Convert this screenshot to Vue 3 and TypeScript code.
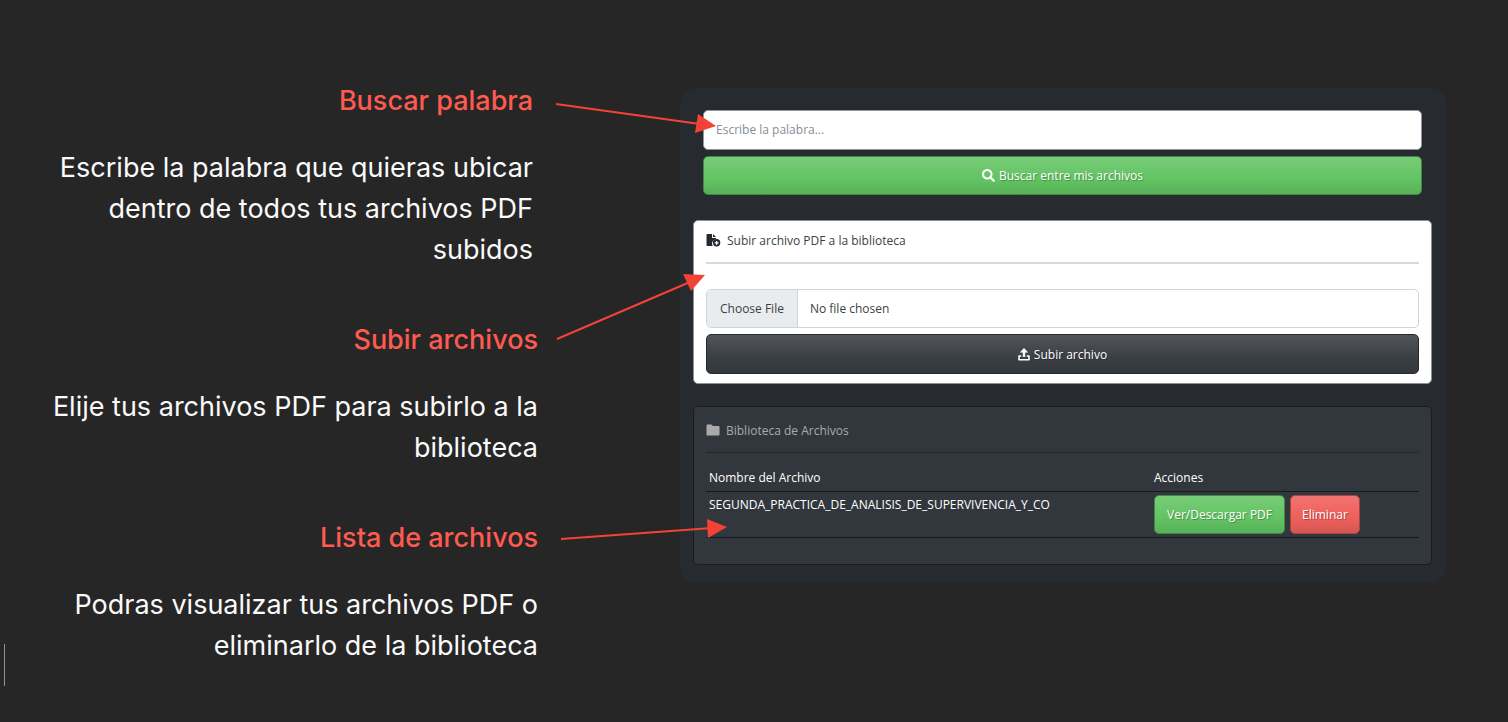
<script setup lang="ts">
import { ref } from 'vue'

interface Note {
  title: string
  text: string
}

const notes: Note[] = [
  { title: 'Buscar palabra', text: 'Escribe la palabra que quieras ubicar dentro de todos tus archivos PDF subidos' },
  { title: 'Subir archivos', text: 'Elije tus archivos PDF para subirlo a la biblioteca' },
  { title: 'Lista de archivos', text: 'Podras visualizar tus archivos PDF o eliminarlo de la biblioteca' },
]

const files = ref<string[]>(['SEGUNDA_PRACTICA_DE_ANALISIS_DE_SUPERVIVENCIA_Y_CO'])
const word = ref('')

function remove(index: number) {
  files.value.splice(index, 1)
}
</script>

<template>
  <main class="page">
    <section class="notes">
      <article v-for="(note, i) in notes" :key="note.title" class="note" :class="{ inset: i === 0 }">
        <h2>{{ note.title }}</h2>
        <p>{{ note.text }}</p>
      </article>
    </section>

    <section class="panel">
      <form class="search" @submit.prevent>
        <input v-model="word" class="word" type="text" placeholder="Escribe la palabra..." aria-label="Palabra" />
        <button class="btn green" type="submit">
          <svg class="icon" viewBox="0 0 512 512" width="13" height="13" aria-hidden="true">
            <path fill="currentColor" d="M505 442.700 405.300 343c-4.500-4.500-10.600-7-17-7H372c27.600-35.300 44-79.700 44-128C416 93.100 322.900 0 208 0S0 93.100 0 208s93.100 208 208 208c48.300 0 92.700-16.400 128-44v16.300c0 6.400 2.500 12.500 7 17l99.700 99.700c9.400 9.400 24.600 9.400 33.900 0l28.300-28.300c9.400-9.400 9.400-24.600.1-34zM208 336c-70.700 0-128-57.200-128-128 0-70.700 57.200-128 128-128 70.700 0 128 57.200 128 128 0 70.700-57.200 128-128 128z" />
          </svg>
          <span>Buscar entre mis archivos</span>
        </button>
      </form>

      <form class="card upload" @submit.prevent>
        <label class="card-title" for="pdf">
          <svg class="icon" viewBox="0 0 15 13" width="15" height="13" aria-hidden="true">
            <path fill="#24292e" d="M1.500 0H6v4h4v1.200A4.300 4.300 0 0 0 6.800 12H1.500C.9 12 .5 11.600.5 11V1c0-.6.4-1 1-1zM7 0l3 3H7z" />
            <circle cx="10.600" cy="8.800" r="3.700" fill="#24292e" />
            <path fill="none" stroke="#fff" stroke-width="1.300" d="M10.600 6.900v3.800M8.700 8.800h3.800" />
          </svg>
          <span>Subir archivo PDF a la biblioteca</span>
        </label>
        <hr />
        <input id="pdf" class="file" type="file" accept="application/pdf" />
        <button class="btn dark" type="submit">
          <svg class="icon" viewBox="0 0 12 13" width="12" height="13" aria-hidden="true">
            <path fill="currentColor" d="M6 0 10.200 4.600H7.200V9H4.800V4.600H1.800z" />
            <path fill="none" stroke="currentColor" stroke-width="1.600" stroke-linejoin="round" d="M3.300 8H1v3.800h10V8H8.700" />
          </svg>
          <span>Subir archivo</span>
        </button>
      </form>

      <section class="card library">
        <h3 class="card-title">
          <svg class="icon" viewBox="0 0 14 12" width="14" height="12" aria-hidden="true">
            <path fill="currentColor" d="M1.500.5h4L7 2h5.500c.7 0 1 .4 1 1v7.500c0 .7-.4 1-1 1h-11c-.7 0-1-.4-1-1v-9c0-.6.4-1 1-1z" />
          </svg>
          <span>Biblioteca de Archivos</span>
        </h3>
        <hr />
        <table>
          <thead>
            <tr>
              <th class="name">Nombre del Archivo</th>
              <th>Acciones</th>
            </tr>
          </thead>
          <tbody>
            <tr v-for="(file, i) in files" :key="file">
              <td>{{ file }}</td>
              <td>
                <div class="actions">
                  <button class="btn green" type="button">Ver/Descargar PDF</button>
                  <button class="btn red" type="button" @click="remove(i)">Eliminar</button>
                </div>
              </td>
            </tr>
          </tbody>
        </table>
      </section>
    </section>

    <svg class="arrows" width="740" height="560" viewBox="0 0 740 560" aria-hidden="true">
      <g stroke="#f44336" stroke-width="2">
        <path d="M556 104 700 124M557 339 690 282M561 539 712 528" />
      </g>
      <g fill="#f44336">
        <path d="M716 126 698 114 695 133z" />
        <path d="M705 275 683 274 691 291z" />
        <path d="M727 527 707 519 708 538z" />
      </g>
    </svg>
    <span class="caret" aria-hidden="true"></span>
  </main>
</template>

<style>
body {
  margin: 0;
  background: #262626;
}
</style>

<style scoped>
* {
  box-sizing: border-box;
}

.page {
  position: relative;
  display: flex;
  align-items: flex-start;
  gap: 142px;
  min-height: 100vh;
  padding: 80px 62px 0 50px;
  background: #262626;
  font-family: 'Open Sans', 'Noto Sans', sans-serif;
  font-size: 12px;
}

.notes {
  display: flex;
  flex: 0 0 488px;
  flex-direction: column;
  gap: 49px;
  font-family: Inter, sans-serif;
  font-size: 27px;
  line-height: 41px;
  text-align: right;
}

.note.inset {
  padding-right: 5px;
}

.note h2 {
  margin: 0 0 26px;
  color: #ff5a50;
  font-size: 27px;
  font-weight: 500;
}

.note p {
  margin: 0;
  color: #fafafa;
}

.panel {
  display: flex;
  flex: 1;
  flex-direction: column;
  min-width: 0;
  margin-top: 8px;
  padding: 22px 14px 18px 13px;
  border-radius: 16px;
  background: #272b30;
}

.search {
  display: grid;
  gap: 6px;
  margin-bottom: 25px;
  padding: 0 10px;
}

.word,
.file {
  width: 100%;
  border: 1px solid #ced4da;
  border-radius: 5px;
  background: #fff;
  color: #3a3f44;
  font: inherit;
}

.word {
  height: 40px;
  padding: 0 12px 2px;
  border-color: #92969c;
}

.word::placeholder {
  color: #868e96;
  opacity: 1;
}

.file {
  height: 39px;
  padding: 0;
  line-height: 37px;
  overflow: hidden;
}

.file::file-selector-button {
  height: 37px;
  margin: 0 12px 0 0;
  padding: 0 13px;
  border: 0;
  border-right: 1px solid #ced4da;
  background: #e9ecef;
  color: #3a3f44;
  font: inherit;
}

.btn {
  display: flex;
  align-items: center;
  justify-content: center;
  gap: 4px;
  height: 39px;
  padding: 0 12px;
  border: 1px solid;
  border-radius: 5px;
  color: #fff;
  font: inherit;
  text-shadow: 1px 1px 1px rgba(0, 0, 0, 0.3);
  white-space: nowrap;
}

.green {
  border-color: #3f8a40;
  background: linear-gradient(#78cc78, #62c462 60%, #58b058);
}

.red {
  padding: 0 11px;
  border-color: #a84440;
  background: linear-gradient(#f17470, #ee5f5b 60%, #d65652);
}

.dark {
  width: 100%;
  height: 40px;
  border-color: #25292c;
  background: linear-gradient(#52565b, #3a3f44 60%, #34393d);
}

.icon {
  flex: none;
}

.card {
  padding: 10px 12px;
  border: 1px solid #8c9095;
  border-radius: 5px;
}

.card-title {
  display: flex;
  align-items: center;
  gap: 6px;
  height: 20px;
  margin: 0;
  font-size: 12px;
  font-weight: 400;
}

hr {
  height: 1px;
  margin: 0;
  border: 0;
}

.upload {
  display: flex;
  flex-direction: column;
  margin-bottom: 22px;
  padding: 9px 12px;
  background: #fff;
  color: #3a3f44;
}

.upload hr {
  height: 2px;
  margin: 12px 0 25px;
  background: #d8d9da;
}

.upload .dark {
  margin-top: 6px;
}

.library {
  padding: 13px 12px 26px;
  border-color: #1a1d20;
  background: #32373d;
  color: #aaa;
}

.library hr {
  margin: 12px 0;
  background: #23272b;
}

table {
  width: 100%;
  border-collapse: collapse;
  color: #fff;
}

th,
td {
  padding: 3px;
  border-bottom: 1px solid #17191c;
  font-weight: 400;
  line-height: 20px;
  text-align: left;
  vertical-align: top;
}

th {
  font-weight: 500;
}

.name {
  width: 445px;
}

.actions {
  display: flex;
  gap: 5px;
}

.arrows {
  position: absolute;
  top: 0;
  left: 0;
  pointer-events: none;
}

.caret {
  position: absolute;
  top: 644px;
  left: 4px;
  width: 1px;
  height: 42px;
  background: #929292;
}
</style>
